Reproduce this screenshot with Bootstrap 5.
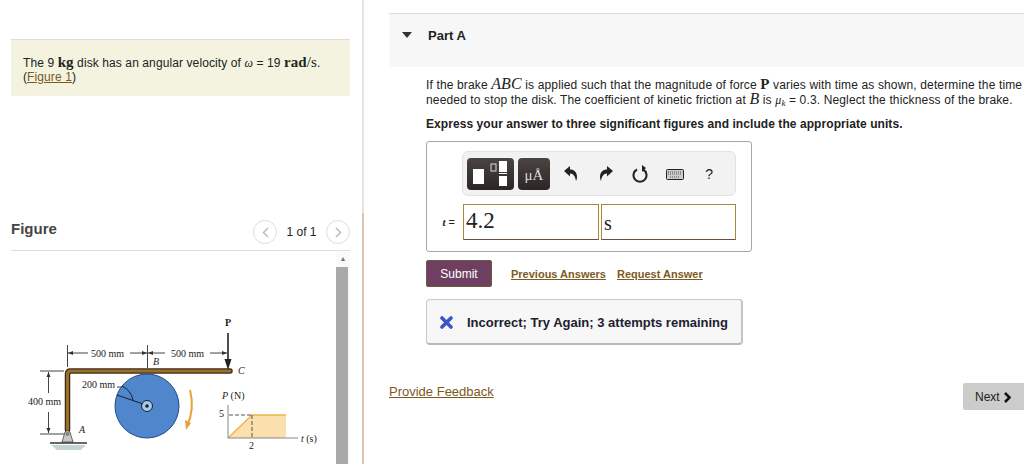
<!doctype html>
<html lang="en">
<head>
    <meta charset="utf-8">
    <meta name="viewport" content="width=device-width, initial-scale=1">
    <title>Part A</title>
    <link href="https://cdn.jsdelivr.net/npm/bootstrap@5.3.3/dist/css/bootstrap.min.css" rel="stylesheet">
    <style>
        html, body { height: 464px; overflow: hidden; }
        body { font-family: "Liberation Sans", Arial, sans-serif; font-size: 12px; line-height: 14px; color: #222; background: #fff; }
        .math { font-family: "Liberation Serif", serif; }
        .math-b { font-family: "Liberation Serif", serif; font-weight: 700; font-size: 15px; }
        .math-i { font-family: "Liberation Serif", serif; font-style: italic; font-size: 16px; }
        a { color: #7c5a1e; }
        .left-pane { width: 362px; height: 464px; flex: none; padding: 39px 12px 0 11px; }
        .pane-rule { width: 2px; height: 464px; flex: none; }
        .rule-top { height: 213px; background: #e8e4de; }
        .rule-bottom { height: 251px; background: #dcc4b0; }
        .note-box { height: 57px; background: #f3f3e0; border-top: 1px solid #ddd; padding: 15px 12px 0; letter-spacing: .1px; }
        .fig-head { height: 155px; padding-top: 124px; border-bottom: 1px solid #ddd; }
        .fig-title { margin-top: 2px; font-size: 15px; font-weight: 700; color: #444; }
        .pager { width: 24px; height: 24px; border: 1px solid #ddd; border-radius: 50%; }
        .pager-num { width: 49px; text-align: center; }
        .scroll-track { width: 14px; height: 213px; background: #fafafa; }
        .scroll-up { height: 16px; color: #777; font-size: 7px; line-height: 16px; text-align: center; }
        .scroll-thumb { height: 197px; background: #a9a9a9; margin-right: 2px; }
        .right-pane { padding: 13px 0 0 25px; min-width: 0; flex: 1; }
        .part-head { height: 54px; border-top: 1px solid #ddd; background: #f7f7f7; padding: 15px 0 0 39px; font-size: 13px; font-weight: 700; position: relative; }
        .part-head::before { content: ""; position: absolute; left: 13px; top: 18px; border: 5px solid transparent; border-top: 6px solid #333; border-bottom: 0; }
        .part-body { padding: 10px 0 0 37px; white-space: nowrap; }
        .part-body p { margin: 0; letter-spacing: .14px; }
        .part-body p.ask { margin-top: 10px; font-weight: 700; letter-spacing: .07px; }
        .answer-box { width: 326px; height: 111px; margin-top: 10px; border: 1px solid #a8a8a8; border-radius: 3px; padding: 9px 15px 0 12px; }
        .tool-bar { width: 274px; height: 45px; margin-left: 23px; background: #f2f2f2; border: 1px solid #e2e2e2; border-radius: 6px; padding: 4px; }
        .tool-dark { height: 32px; background: linear-gradient(#4b4443, #2b2625); border-radius: 4px; }
        .tool-slot { width: 34.5px; text-align: center; }
        .ans-input { height: 36px; border: 1px solid #a58a3c; border-bottom-color: #6d5040; font-family: "Liberation Serif", serif; padding: 0 2px; }
        .ans-label { width: 24px; padding-right: 8px; font-size: 11px; text-align: right; white-space: nowrap; }
        .btn-submit { width: 66px; height: 27px; padding: 0; font-size: 12px; color: #fff; background: #6f3f62; border: 1px solid #6c5a3c; border-radius: 2px; }
        .link-row { margin-top: 8px; }
        .link-row a { font-weight: 700; font-size: 11px; color: #7c5a1e; }
        .result-box { width: 317px; height: 46px; margin-top: 12px; background: #f7f7f7; border: 1px solid #c8c8c8; border-bottom: 2px solid #b8b8b8; border-right: 2px solid #c4c4c4; border-radius: 4px; padding: 2px 13px 0; font-size: 13px; font-weight: 700; color: #1c2030; }
        .btn-next { position: absolute; right: 0; top: 383px; width: 61px; height: 27px; padding: 0; background: #ccc; color: #222; font-size: 12px; border: 0; border-radius: 2px 0 0 2px; }
        .feedback { margin-top: 39px; font-size: 13px; line-height: 16px; }
    </style>
</head>
<body>

<div class="d-flex">
    <!-- Panel izquierdo -->
    <div class="left-pane">
        <div class="note-box">
            The 9 <span class="math-b">kg</span> disk has an angular velocity of <span class="math fst-italic">ω</span> = 19 <span class="math-b">rad</span><span class="math-b fw-normal">/s</span>.<br>
            (<a href="#">Figure 1</a>)
        </div>
        <div class="fig-head d-flex align-items-start justify-content-between">
            <span class="fig-title">Figure</span>
            <div class="d-flex align-items-center">
                <span class="pager d-flex align-items-center justify-content-center"><svg width="7" height="11" viewBox="0 0 7 11"><path d="M6 1L1.500 5.500 6 10" fill="none" stroke="#bbb" stroke-width="1.500"/></svg></span>
                <span class="pager-num">1 of 1</span>
                <span class="pager d-flex align-items-center justify-content-center"><svg width="7" height="11" viewBox="0 0 7 11"><path d="M1 1l4.500 4.500L1 10" fill="none" stroke="#bbb" stroke-width="1.500"/></svg></span>
            </div>
        </div>
        <div class="d-flex">
            <svg width="325" height="213" viewBox="11 251 325 213" font-family="Liberation Serif, serif" font-size="10" fill="#222">
                <!-- dimensiones -->
                <g stroke="#444" stroke-width="1" fill="none">
                    <path d="M67.500 345v22M147.500 345v23M68 353h20M130 353h35M210 353h17"/>
                    <path d="M40 371h24M40 434h24M48.500 372v21M48.500 412v21M117 387h5"/>
                </g>
                <path d="M68 353l5-2v4zM147 353l-5-2v4zM148 353l5-2v4zM227 353l-5-2v4zM48.500 372l-2 5h4zM48.500 433l-2-5h4z" fill="#333"/>
                <text x="91" y="357">500 mm</text>
                <text x="171" y="357">500 mm</text>
                <text x="28" y="405">400 mm</text>
                <text x="82" y="388">200 mm</text>
                <text x="153" y="365" font-style="italic">B</text>
                <text x="238" y="374" font-style="italic">C</text>
                <text x="79" y="433" font-style="italic">A</text>
                <text x="225" y="326" font-weight="700">P</text>
                <!-- freno -->
                <path d="M67.500 430V374q0-3 3-3H230" fill="none" stroke="#3d2a12" stroke-width="5.500" stroke-linecap="round"/>
                <path d="M67.500 430V374q0-3 3-3H230" fill="none" stroke="#9a6f2c" stroke-width="3" stroke-linecap="round"/>
                <!-- apoyo A -->
                <path d="M62 442l3-10q2.500-3 5 0l3 10z" fill="#c9c9c9" stroke="#333" stroke-width=".7"/>
                <circle cx="67.500" cy="434" r="1.500" fill="#999" stroke="#333" stroke-width=".5"/>
                <path d="M50 443h37" stroke="#333" stroke-width="1.500"/>
                <path d="M51 445h35l-5 5H57z" fill="#c3d4d6"/>
                <!-- disco -->
                <circle cx="147" cy="406" r="32" fill="#4f86cc" stroke="#1f4a88" stroke-width="1"/>
                <circle cx="147" cy="406" r="5.500" fill="#a9c9e8" stroke="#123" stroke-width="1"/>
                <circle cx="147" cy="406" r="1.800" fill="#123"/>
                <path d="M117 395L143 404M122 386a20 20 0 0 1 11 14" fill="none" stroke="#123" stroke-width="1"/>
                <path d="M190 390q5 19-3 36" fill="none" stroke="#e9a23b" stroke-width="2"/>
                <path d="M186 430l-1-10 6 3z" fill="#e9a23b"/>
                <!-- fuerza P -->
                <path d="M228 333v28" stroke="#222" stroke-width="1.600"/>
                <path d="M224.500 359h7l-3.500 11z" fill="#222"/>
                <!-- grafica -->
                <path d="M228 438l24-23h34v23z" fill="#fbe0ae"/>
                <path d="M228 438l24-23h34" fill="none" stroke="#e8b64a" stroke-width="1.300"/>
                <path d="M228 405v33h70" fill="none" stroke="#888" stroke-width="1"/>
                <path d="M229 415h22M252 415v23" fill="none" stroke="#555" stroke-width="1" stroke-dasharray="4 2"/>
                <text x="222" y="399"><tspan font-style="italic">P</tspan> (N)</text>
                <text x="219" y="417">5</text>
                <text x="249" y="449">2</text>
                <text x="301" y="442"><tspan font-style="italic">t</tspan> (s)</text>
            </svg>
            <div class="scroll-track">
                <div class="scroll-up">&#9650;</div>
                <div class="scroll-thumb"></div>
            </div>
        </div>
    </div>
    <div class="pane-rule">
        <div class="rule-top"></div>
        <div class="rule-bottom"></div>
    </div>

    <!-- Panel derecho -->
    <div class="right-pane">
        <div class="part-head">Part A</div>
        <div class="part-body">
            <p>If the brake <span class="math-i">ABC</span> is applied such that the magnitude of force <span class="math-b">P</span> varies with time as shown, determine the time<br>
            needed to stop the disk. The coefficient of kinetic friction at <span class="math-i">B</span> is <span class="math fst-italic">μ<sub>k</sub></span> = 0.3. Neglect the thickness of the brake.</p>
            <p class="ask">Express your answer to three significant figures and include the appropriate units.</p>

            <div class="answer-box">
                <div class="tool-bar d-flex align-items-center">
                    <div class="tool-dark d-flex align-items-center justify-content-center" style="width:47px">
                        <svg width="37" height="26" viewBox="0 0 37 26"><rect x="1" y="8" width="11" height="15" fill="#fff"/><rect x="19" y="3" width="5" height="7" fill="none" stroke="#ddd"/><rect x="27" y="0" width="8" height="11" fill="#fff"/><rect x="27" y="12" width="8" height="1" fill="#fff"/><rect x="27" y="15" width="8" height="10" fill="#fff"/></svg>
                    </div>
                    <div class="tool-dark ms-1 me-1 text-center math" style="width:32px;font-size:15px;line-height:34px;color:#ddd">μÅ</div>
                    <span class="tool-slot"><svg width="14" height="15" viewBox="0 0 14 15"><path d="M0 5L6 0V3.500C10 3.500 13 6 13 11C13 12.500 12.500 14 12 15C11.500 11 9.500 7.500 6 7.500V10.500Z" fill="#222"/></svg></span>
                    <span class="tool-slot"><svg width="14" height="15" viewBox="0 0 14 15"><path d="M14 5L8 0V3.500C4 3.500 1 6 1 11C1 12.500 1.500 14 2 15C2.500 11 4.500 7.500 8 7.500V10.500Z" fill="#222"/></svg></span>
                    <span class="tool-slot"><svg width="16" height="18" viewBox="0 0 16 18"><path d="M5 4.500a6.500 6.500 0 1 0 6 0" fill="none" stroke="#222" stroke-width="2"/><path d="M10 0v7l4-4z" fill="#222"/></svg></span>
                    <span class="tool-slot"><svg width="18" height="11" viewBox="0 0 18 11"><rect x=".5" y=".5" width="17" height="10" rx="1" fill="#ccc" stroke="#222"/><path d="M2 3h14M2 5h14M4 8h10" stroke="#555" stroke-dasharray="1 1"/></svg></span>
                    <span class="tool-slot" style="font-size:14px">?</span>
                </div>
                <div class="d-flex align-items-center mt-2">
                    <span class="ans-label"><i class="math fw-bold">t</i> =</span>
                    <div class="ans-input" style="width:136px;font-size:23px;line-height:32px">4.2</div>
                    <div class="ans-input" style="width:135px;margin-left:2px;font-size:20px;line-height:36px">s</div>
                </div>
            </div>

            <div class="link-row d-flex align-items-center">
                <button class="btn-submit">Submit</button>
                <a style="margin-left:19px" href="#">Previous Answers</a>
                <a style="margin-left:11px" href="#">Request Answer</a>
            </div>

            <div class="result-box d-flex align-items-center">
                <svg width="13" height="13" viewBox="0 0 13 13"><path d="M2 2l9 9M11 2l-9 9" stroke="#3d55c4" stroke-width="3.600" stroke-linecap="round"/></svg>
                <span style="margin-left:14px">Incorrect; Try Again; 3 attempts remaining</span>
            </div>
        </div>
        <div class="feedback"><a href="#">Provide Feedback</a></div>
        <button class="btn-next">Next <svg width="9" height="11" viewBox="0 0 9 11"><path d="M2 1l4.500 4.500L2 10" fill="none" stroke="#111" stroke-width="2.500"/></svg></button>
    </div>
</div>

</body>
</html>
